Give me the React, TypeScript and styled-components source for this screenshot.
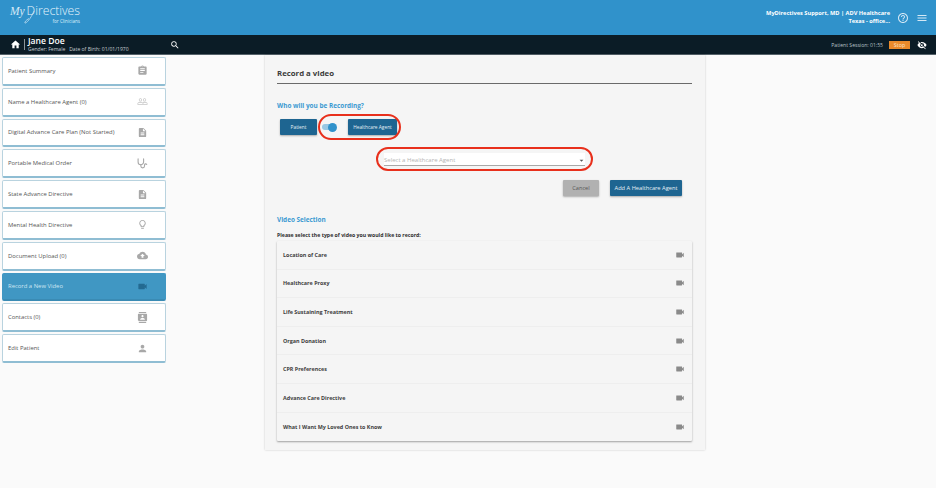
import React from "react";
import styled, { createGlobalStyle } from "styled-components";
import {
  MdAssignment,
  MdPeopleOutline,
  MdDescription,
  MdCloudUpload,
  MdVideocam,
  MdContacts,
  MdPerson,
  MdHome,
  MdSearch,
  MdHelpOutline,
  MdMenu,
  MdVisibilityOff,
  MdOutlineLightbulb,
  MdArrowDropDown,
} from "react-icons/md";

const StethoscopeIcon = () => (
  <svg viewBox="0 0 12 12" fill="none" stroke="currentColor" strokeWidth="1.2" strokeLinecap="round">
    <path d="M1.2 1v3.4a3 3 0 0 0 6 0V1" />
    <path d="M4.2 7.4v1.4a2 2 0 0 0 4 0V7.6a1.3 1.3 0 0 1 2.4-.6" />
  </svg>
);

const menuItems = [
  { label: "Patient Summary", icon: <MdAssignment /> },
  { label: "Name a Healthcare Agent (0)", icon: <MdPeopleOutline />, faint: true },
  { label: "Digital Advance Care Plan (Not Started)", icon: <MdDescription /> },
  { label: "Portable Medical Order", icon: <StethoscopeIcon /> },
  { label: "State Advance Directive", icon: <MdDescription /> },
  { label: "Mental Health Directive", icon: <MdOutlineLightbulb /> },
  { label: "Document Upload (0)", icon: <MdCloudUpload /> },
  { label: "Record a New Video", icon: <MdVideocam />, active: true },
  { label: "Contacts (0)", icon: <MdContacts /> },
  { label: "Edit Patient", icon: <MdPerson /> },
];

const videoTypes = [
  "Location of Care",
  "Healthcare Proxy",
  "Life Sustaining Treatment",
  "Organ Donation",
  "CPR Preferences",
  "Advance Care Directive",
  "What I Want My Loved Ones to Know",
];

const GlobalStyle = createGlobalStyle`
  html, body {
    margin: 0;
    padding: 0;
    background: #fafafa;
    font-family: "Open Sans", "Liberation Sans", sans-serif;
  }
  * {
    box-sizing: border-box;
  }
`;

const Page = styled.div`
  width: 936px;
  height: 488px;
  overflow: hidden;
  background: #fafafa;
`;

const TopBar = styled.header`
  height: 35px;
  background: #3092cb;
  display: flex;
  align-items: center;
  justify-content: space-between;
  padding: 0 8px 0 10px;
  color: #fff;
`;

const Logo = styled.div`
  position: relative;
  display: flex;
  flex-direction: column;
  width: 70px;
  margin-top: -8px;
`;

const LogoMain = styled.div`
  display: flex;
  align-items: baseline;
  font-size: 12.2px;
  line-height: 13px;
  font-weight: 300;
  color: #e4f2fb;
`;

const LogoMy = styled.span`
  font-family: "Liberation Serif", serif;
  font-style: italic;
  font-size: 11.5px;
  width: 17px;
  color: #d5e9f6;
`;

const LogoSub = styled.div`
  font-size: 4.6px;
  line-height: 6px;
  text-align: right;
  color: #dceefa;
`;

const LogoSwoosh = styled.svg`
  position: absolute;
  left: 11px;
  top: 6px;
  width: 16px;
  height: 14px;
`;

const UserArea = styled.div`
  display: flex;
  align-items: center;
`;

const UserName = styled.div`
  font-size: 5.67px;
  line-height: 8px;
  font-weight: 700;
  text-align: right;
  margin-top: -1px;
`;

const TopIcon = styled.span`
  display: flex;
  font-size: 12px;
  margin-left: 7px;
  color: #d4e8f5;
`;

const PatientBar = styled.div`
  height: 20px;
  background: #0b1c26;
  display: flex;
  align-items: center;
  color: #fff;
  padding: 0 9px 0 10px;
  border-bottom: 1px solid #55626a;
`;

const HomeIcon = styled.span`
  display: flex;
  font-size: 11px;
`;

const PatientInfo = styled.div`
  margin-left: 3px;
  padding-left: 3px;
  border-left: 1px solid #8b959b;
  width: 146px;
  height: 11px;
  display: flex;
  flex-direction: column;
  justify-content: center;
`;

const PatientName = styled.div`
  font-size: 8.6px;
  line-height: 10px;
  font-weight: 600;
  white-space: nowrap;
`;

const PatientMeta = styled.div`
  font-size: 5.05px;
  line-height: 7px;
  white-space: nowrap;
  color: #c8cfd3;
`;

const SearchIcon = styled.span`
  display: flex;
  font-size: 10px;
`;

const SessionArea = styled.div`
  margin-left: auto;
  display: flex;
  align-items: center;
`;

const SessionText = styled.span`
  font-size: 5.1px;
  color: #b9c1c6;
`;

const StopButton = styled.span`
  width: 21px;
  height: 8px;
  margin-left: 6px;
  background: #e98a2b;
  color: #fbe3c9;
  font-size: 5.4px;
  line-height: 8px;
  text-align: center;
`;

const EyeIcon = styled.span`
  display: flex;
  font-size: 10px;
  margin-left: 7px;
`;

const Body = styled.div`
  display: flex;
  align-items: flex-start;
`;

const Sidebar = styled.nav`
  width: 164px;
  margin: 2px 0 0 2px;
  display: flex;
  flex-direction: column;
  gap: 2px;
`;

const MenuItem = styled.div<{ $active?: boolean }>`
  height: 28.8px;
  display: flex;
  align-items: center;
  justify-content: space-between;
  padding: 0 17px 0 5px;
  border-radius: 2px;
  font-size: 5.9px;
  background: ${(p) => (p.$active ? "#4097c3" : "#fff")};
  color: ${(p) => (p.$active ? "#cfe6f2" : "#555")};
  border: 1px solid ${(p) => (p.$active ? "#4097c3" : "#b9d3df")};
  border-bottom: 2px solid ${(p) => (p.$active ? "#3a8bb4" : "#8fbdd3")};
  white-space: nowrap;
`;

const MenuIcon = styled.span<{ $active?: boolean; $faint?: boolean }>`
  display: flex;
  font-size: 11px;
  color: ${(p) => (p.$active ? "#236a91" : p.$faint ? "#c6c6c6" : "#a8a8a8")};
  & svg {
    width: 11px;
    height: 11px;
  }
`;

const Panel = styled.main`
  width: 440px;
  height: 395px;
  margin-left: 99px;
  background: #f5f5f5;
  padding: 12px 13px 0 12px;
  box-shadow: 0 0 2px rgba(0, 0, 0, 0.2);
`;

const PanelTitle = styled.h1`
  margin: 0;
  height: 17px;
  font-size: 7.8px;
  line-height: 12px;
  font-weight: 700;
  color: #3c3c3c;
  border-bottom: 1px solid #6a6a6a;
`;

const SectionTitle = styled.h2`
  margin: 17px 0 0;
  font-size: 6.4px;
  line-height: 9px;
  font-weight: 700;
  color: #3c9ad2;
`;

const RecordRow = styled.div`
  display: flex;
  align-items: center;
  margin: 9px 0 0 3px;
  gap: 5px;
`;

const DarkButton = styled.span<{ $width: number }>`
  width: ${(p) => p.$width}px;
  height: 16px;
  background: #1e6591;
  color: #e6f0f6;
  font-size: 4.8px;
  line-height: 16px;
  text-align: center;
  border-radius: 1px;
  box-shadow: 0 1px 2px rgba(0, 0, 0, 0.3);
  white-space: nowrap;
`;

const Circled = styled.div<{ $x: number; $y: number }>`
  position: relative;
  display: flex;
  align-items: center;
  &::after {
    content: "";
    position: absolute;
    inset: ${(p) => `-${p.$y}px -${p.$x}px`};
    border: 2px solid #e8301c;
    border-radius: 13px;
  }
`;

const Toggle = styled.span`
  position: relative;
  width: 13px;
  height: 6px;
  margin-right: 13px;
  background: #98c8e4;
  border-radius: 3px;
`;

const ToggleKnob = styled.span`
  position: absolute;
  right: -2px;
  top: -1.5px;
  width: 9px;
  height: 9px;
  border-radius: 50%;
  background: #3092cb;
`;

const SelectRow = styled.div`
  display: flex;
  justify-content: center;
  margin: 18px 0 0;
`;

const AgentSelect = styled(Circled)`
  width: 201px;
  height: 13px;
  justify-content: space-between;
  padding-top: 2px;
  background: #fff;
  border-bottom: 1px solid #a8a8a8;
  font-size: 6px;
  color: #b4b4b4;
`;

const SelectCaret = styled.span`
  display: flex;
  font-size: 9px;
  margin-right: -1px;
  color: #555;
`;

const ActionRow = styled.div`
  display: flex;
  justify-content: flex-end;
  gap: 11px;
  margin: 14px 10px 0 0;
`;

const GreyButton = styled(DarkButton)`
  background: #b1b1b1;
  color: #555;
  font-size: 5.6px;
`;

const WideButton = styled(DarkButton)`
  font-size: 5.7px;
`;

const VideoTitle = styled(SectionTitle)`
  margin-top: 19px;
`;

const Hint = styled.p`
  margin: 8px 0 0;
  font-size: 5.2px;
  line-height: 7px;
  font-weight: 700;
  color: #2e2e2e;
`;

const VideoList = styled.div`
  margin-top: 2px;
  background: #f5f5f5;
  box-shadow: 0 1px 2px rgba(0, 0, 0, 0.35);
  border-radius: 1px;
`;

const VideoRow = styled.div`
  height: 28.6px;
  display: flex;
  align-items: center;
  justify-content: space-between;
  padding: 0 7px 0 6px;
  font-size: 5.4px;
  font-weight: 700;
  color: #3e3e3e;
  border-bottom: 1px solid #eeeeee;
  &:last-child {
    border-bottom: none;
  }
`;

const VideoIcon = styled.span`
  display: flex;
  font-size: 10px;
  color: #8a8a8a;
`;

export default function App() {
  return (
    <Page>
      <GlobalStyle />
      <TopBar>
        <Logo>
          <LogoMain>
            <LogoMy>My</LogoMy>
            Directives
          </LogoMain>
          <LogoSub>for Clinicians</LogoSub>
          <LogoSwoosh viewBox="0 0 16 14" fill="none" stroke="#d5e9f6" strokeWidth="0.7">
            <path d="M13 1C11 6 7 12 4.500 13 3 13.500 4 10.500 8 8.500" />
          </LogoSwoosh>
        </Logo>
        <UserArea>
          <UserName>
            MyDirectives Support, MD | ADV Healthcare
            <br />
            Texas - office...
          </UserName>
          <TopIcon>
            <MdHelpOutline />
          </TopIcon>
          <TopIcon>
            <MdMenu />
          </TopIcon>
        </UserArea>
      </TopBar>
      <PatientBar>
        <HomeIcon>
          <MdHome />
        </HomeIcon>
        <PatientInfo>
          <PatientName>Jane Doe</PatientName>
          <PatientMeta>Gender: Female &nbsp; Date of Birth: 01/01/1970</PatientMeta>
        </PatientInfo>
        <SearchIcon>
          <MdSearch />
        </SearchIcon>
        <SessionArea>
          <SessionText>Patient Session: 01:55</SessionText>
          <StopButton>Stop</StopButton>
          <EyeIcon>
            <MdVisibilityOff />
          </EyeIcon>
        </SessionArea>
      </PatientBar>
      <Body>
        <Sidebar>
          {menuItems.map((item) => (
            <MenuItem key={item.label} $active={item.active}>
              {item.label}
              <MenuIcon $active={item.active} $faint={item.faint}>
                {item.icon}
              </MenuIcon>
            </MenuItem>
          ))}
        </Sidebar>
        <Panel>
          <PanelTitle>Record a video</PanelTitle>
          <SectionTitle>Who will you be Recording?</SectionTitle>
          <RecordRow>
            <DarkButton $width={37}>Patient</DarkButton>
            <Circled $x={4} $y={5}>
              <Toggle>
                <ToggleKnob />
              </Toggle>
              <DarkButton $width={49}>Healthcare Agent</DarkButton>
            </Circled>
          </RecordRow>
          <SelectRow>
            <AgentSelect $x={8} $y={6}>
              Select a Healthcare Agent
              <SelectCaret>
                <MdArrowDropDown />
              </SelectCaret>
            </AgentSelect>
          </SelectRow>
          <ActionRow>
            <GreyButton $width={36}>Cancel</GreyButton>
            <WideButton $width={72}>Add A Healthcare Agent</WideButton>
          </ActionRow>
          <VideoTitle>Video Selection</VideoTitle>
          <Hint>Please select the type of video you would like to record:</Hint>
          <VideoList>
            {videoTypes.map((type) => (
              <VideoRow key={type}>
                {type}
                <VideoIcon>
                  <MdVideocam />
                </VideoIcon>
              </VideoRow>
            ))}
          </VideoList>
        </Panel>
      </Body>
    </Page>
  );
}
